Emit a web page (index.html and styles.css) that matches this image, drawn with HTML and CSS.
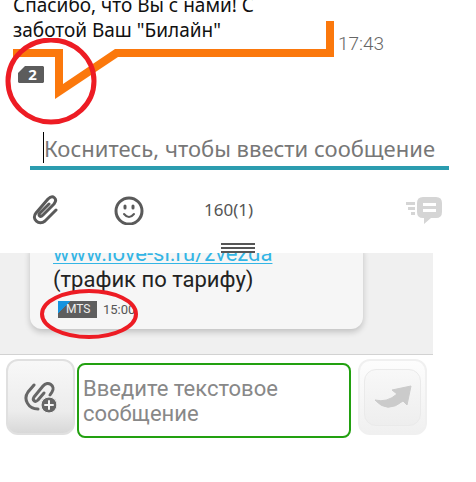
FILE: index.html
```
<!DOCTYPE html>
<html lang="ru">
<head>
  <meta charset="UTF-8">
  <meta name="viewport" content="width=device-width, initial-scale=1.0">
  <title>Сообщения</title>
  <link rel="stylesheet" href="styles.css">
</head>
<body>
  <section class="chat">
    <div class="message">
      <p class="message-text">Спасибо, что Вы с нами! С<br>заботой Ваш "Билайн"</p>
      <div class="message-edge">
        <svg class="edge" width="321" height="79" viewBox="0 0 321 79" aria-hidden="true">
          <path d="M0 28H50V63L102 28H313V0H321V36H105L42 78V36H0Z" fill="#fb780c"/>
        </svg>
        <time class="time">17:43</time>
        <span class="sim">
          <svg class="sim-card" width="26" height="17" viewBox="0 0 26 17" aria-hidden="true">
            <path d="M7 0H25L26 1V16L25 17H1L0 16V7Z" fill="#5c5c5c"/>
          </svg>
          <span class="sim-number">2</span>
        </span>
        <svg class="ring" width="92" height="87" viewBox="0 0 92 87" aria-hidden="true">
          <ellipse cx="46" cy="43" rx="43" ry="41" fill="none" stroke="#ed1c24" stroke-width="5"/>
        </svg>
      </div>
    </div>

    <div class="compose">
      <span class="caret"></span>
      <input class="compose-input" type="text" aria-label="Сообщение" placeholder="Коснитесь, чтобы ввести сообщение">
    </div>

    <div class="toolbar">
      <button class="icon-button" type="button" aria-label="Прикрепить">
        <svg width="28" height="30" viewBox="0 0 28 30" fill="none" stroke="#5a5a5a" stroke-width="3" stroke-linecap="round" stroke-linejoin="round">
          <path d="M24 15L13 26C7 31 -1 24 4 18L16 4C21 -1 26 4 22 9L11 20C8 23 6 20 8 18L17 9"/>
        </svg>
      </button>
      <button class="icon-button smile" type="button" aria-label="Смайлик">
        <svg width="30" height="30" viewBox="0 0 30 30" fill="none" stroke="#5a5a5a">
          <circle cx="15" cy="16" r="13" stroke-width="3"/>
          <path d="M10 19Q15 25 20 19" stroke-width="2" stroke-linecap="round"/>
          <path d="M11 11V13M19 11V13" stroke-width="3" stroke-linecap="round"/>
        </svg>
      </button>
      <span class="counter">160(1)</span>
      <button class="icon-button send" type="button" aria-label="Отправить">
        <svg width="36" height="28" viewBox="0 0 36 28" fill="#d5d5d5">
          <path d="M0 6H9V9H0ZM2 11H9V14H2ZM5 16H9V19H5Z"/>
          <path d="M17 1H30Q36 1 36 7V16Q36 22 30 22H25L18 28V22H17Q11 22 11 16V7Q11 1 17 1ZM17 7V10H30V7ZM17 13V16H30V13Z" fill-rule="evenodd"/>
        </svg>
      </button>
    </div>
    <div class="handle"></div>
  </section>

  <section class="chat-sms">
    <div class="history">
      <div class="card">
        <a class="card-link" href="#">www.love-sl.ru/zvezda</a>
        <p class="card-text">(трафик по тарифу)</p>
        <div class="card-meta">
          <span class="operator">MTS</span>
          <time class="card-time">15:00</time>
          <svg class="ring ring-wide" width="98" height="50" viewBox="0 0 98 50" aria-hidden="true">
            <ellipse cx="49" cy="25" rx="47" ry="23" fill="none" stroke="#ed1c24" stroke-width="4"/>
          </svg>
        </div>
      </div>
    </div>

    <div class="reply">
      <button class="tile" type="button" aria-label="Добавить вложение">
        <svg width="34" height="32" viewBox="0 0 34 32" fill="none" stroke="#666" stroke-width="3" stroke-linecap="round" stroke-linejoin="round">
          <path d="M10 4L4 11C-1 18 4 28 14 28"/>
          <path d="M20 12L14 19C11 22 8 19 10 16L19 5C24 -1 32 5 28 11L26 14"/>
          <circle cx="25" cy="24" r="8" fill="#666" stroke="#f0f0f0" stroke-width="1"/>
          <path d="M25 20V28M21 24H29" stroke="#f4f4f4" stroke-width="2"/>
        </svg>
      </button>
      <textarea class="reply-input" aria-label="Текстовое сообщение" placeholder="Введите текстовое сообщение"></textarea>
      <button class="tile tile-send" type="button" aria-label="Отправить сообщение">
        <span class="tile-inner">
          <svg width="38" height="24" viewBox="0 0 38 24" fill="#cbcbcb" stroke="#cbcbcb" stroke-width="1" stroke-linejoin="round">
            <path d="M1 15Q13 18 23 9L18 5L37 1L33 20L29 16Q13 29 1 15Z"/>
          </svg>
        </span>
      </button>
    </div>
  </section>
</body>
</html>
```

FILE: styles.css
```
* {
  box-sizing: border-box;
}
body {
  margin: 0;
  background: #fff;
  font-family: Roboto, "Noto Sans", sans-serif;
}
p {
  margin: 0;
}
button {
  padding: 0;
  border: none;
  background: none;
}
svg {
  display: block;
}

/* Upper conversation */
.chat {
  overflow: hidden;
  font-family: "Noto Sans", sans-serif;
}
.message {
  padding-left: 13px;
}
.message-text {
  margin-top: -7px;
  font-size: 19px;
  line-height: 25px;
  color: #111;
}
.message-edge {
  position: relative;
  display: flex;
  gap: 4px;
  margin-top: -22px;
}
.time {
  padding-top: 12px;
  font-family: Roboto, sans-serif;
  font-weight: 300;
  font-size: 19px;
  line-height: 22px;
  color: #666;
}
.sim {
  position: absolute;
  left: 5px;
  top: 45px;
}
.sim-number {
  position: absolute;
  inset: 0;
  padding-left: 3px;
  text-align: center;
  font-size: 15px;
  font-weight: bold;
  line-height: 17px;
  color: #fff;
}
.ring {
  position: absolute;
  left: -8px;
  top: 17px;
}
.compose {
  display: flex;
  align-items: center;
  margin: 32px 27px 0 30px;
  padding: 0 0 3px 13px;
  border-bottom: 4px solid #2b9caf;
}
.caret {
  width: 1px;
  height: 31px;
  background: #000;
}
.compose-input {
  flex: 1;
  min-width: 0;
  height: 31px;
  padding: 0;
  border: none;
  outline: none;
  background: none;
  font-family: inherit;
  font-size: 22px;
}
.compose-input::placeholder {
  color: #777;
}
.toolbar {
  display: flex;
  align-items: center;
  margin: 25px 34px 0 32px;
}
.smile {
  margin-left: 54px;
}
.counter {
  margin-left: 60px;
  font-size: 17px;
  line-height: 30px;
  color: #555;
}
.send {
  margin-left: auto;
}
.handle {
  width: 34px;
  height: 10px;
  margin: 18px auto 0;
  background: repeating-linear-gradient(#555 0 2px, #fff 2px 4px);
}

/* Lower conversation */
.chat-sms {
  margin-right: 43px;
}
.history {
  overflow: hidden;
  padding: 0 70px 25px 30px;
  background: #f0f0f0;
  border-bottom: 1px solid #d2d2d2;
}
.card {
  margin-top: -12px;
  padding: 0 23px 11px;
  border-radius: 12px;
  background: #f6f6f6;
  box-shadow: 0 3px 6px rgba(0, 0, 0, 0.2);
  font-size: 22px;
  line-height: 26px;
}
.card-link {
  color: #33b5e5;
  text-decoration-thickness: 1px;
  text-underline-offset: 2px;
}
.card-text {
  color: #222;
}
.card-meta {
  position: relative;
  display: flex;
  align-items: center;
  gap: 6px;
  padding: 8px 0 0 5px;
}
.operator {
  width: 39px;
  padding-left: 8px;
  background: linear-gradient(135deg, #1593df 9px, #5e5e5e 9px);
  font-size: 12px;
  line-height: 17px;
  color: #eee;
}
.card-time {
  font-size: 13px;
  line-height: 17px;
  color: #555;
}
.ring-wide {
  left: -13px;
  top: -4px;
}
.reply {
  display: flex;
  align-items: flex-start;
  padding: 4px 6px;
}
.tile {
  display: flex;
  align-items: center;
  justify-content: center;
  width: 69px;
  height: 76px;
  border: 2px solid #e0e0e0;
  border-radius: 12px;
  background: linear-gradient(#f8f8f8, #ececec 70%, #d8d8d8);
}
.tile-send {
  border-color: #f0f0f0;
  background: linear-gradient(#fdfdfd, #f0f0f0);
}
.tile-inner {
  display: flex;
  align-items: center;
  justify-content: center;
  width: 57px;
  height: 57px;
  border: 1px solid #eaeaea;
  border-radius: 12px;
  background: linear-gradient(#f8f8f8, #eee);
}
.reply-input {
  flex: 1;
  min-width: 0;
  height: 75px;
  margin: 4px 7px 0 2px;
  padding: 11px 4px;
  border: 2px solid #22a010;
  border-radius: 8px;
  outline: none;
  resize: none;
  overflow: hidden;
  background: #fff;
  font-family: inherit;
  font-size: 22px;
  line-height: 25px;
}
.reply-input::placeholder {
  color: #888;
}
```
